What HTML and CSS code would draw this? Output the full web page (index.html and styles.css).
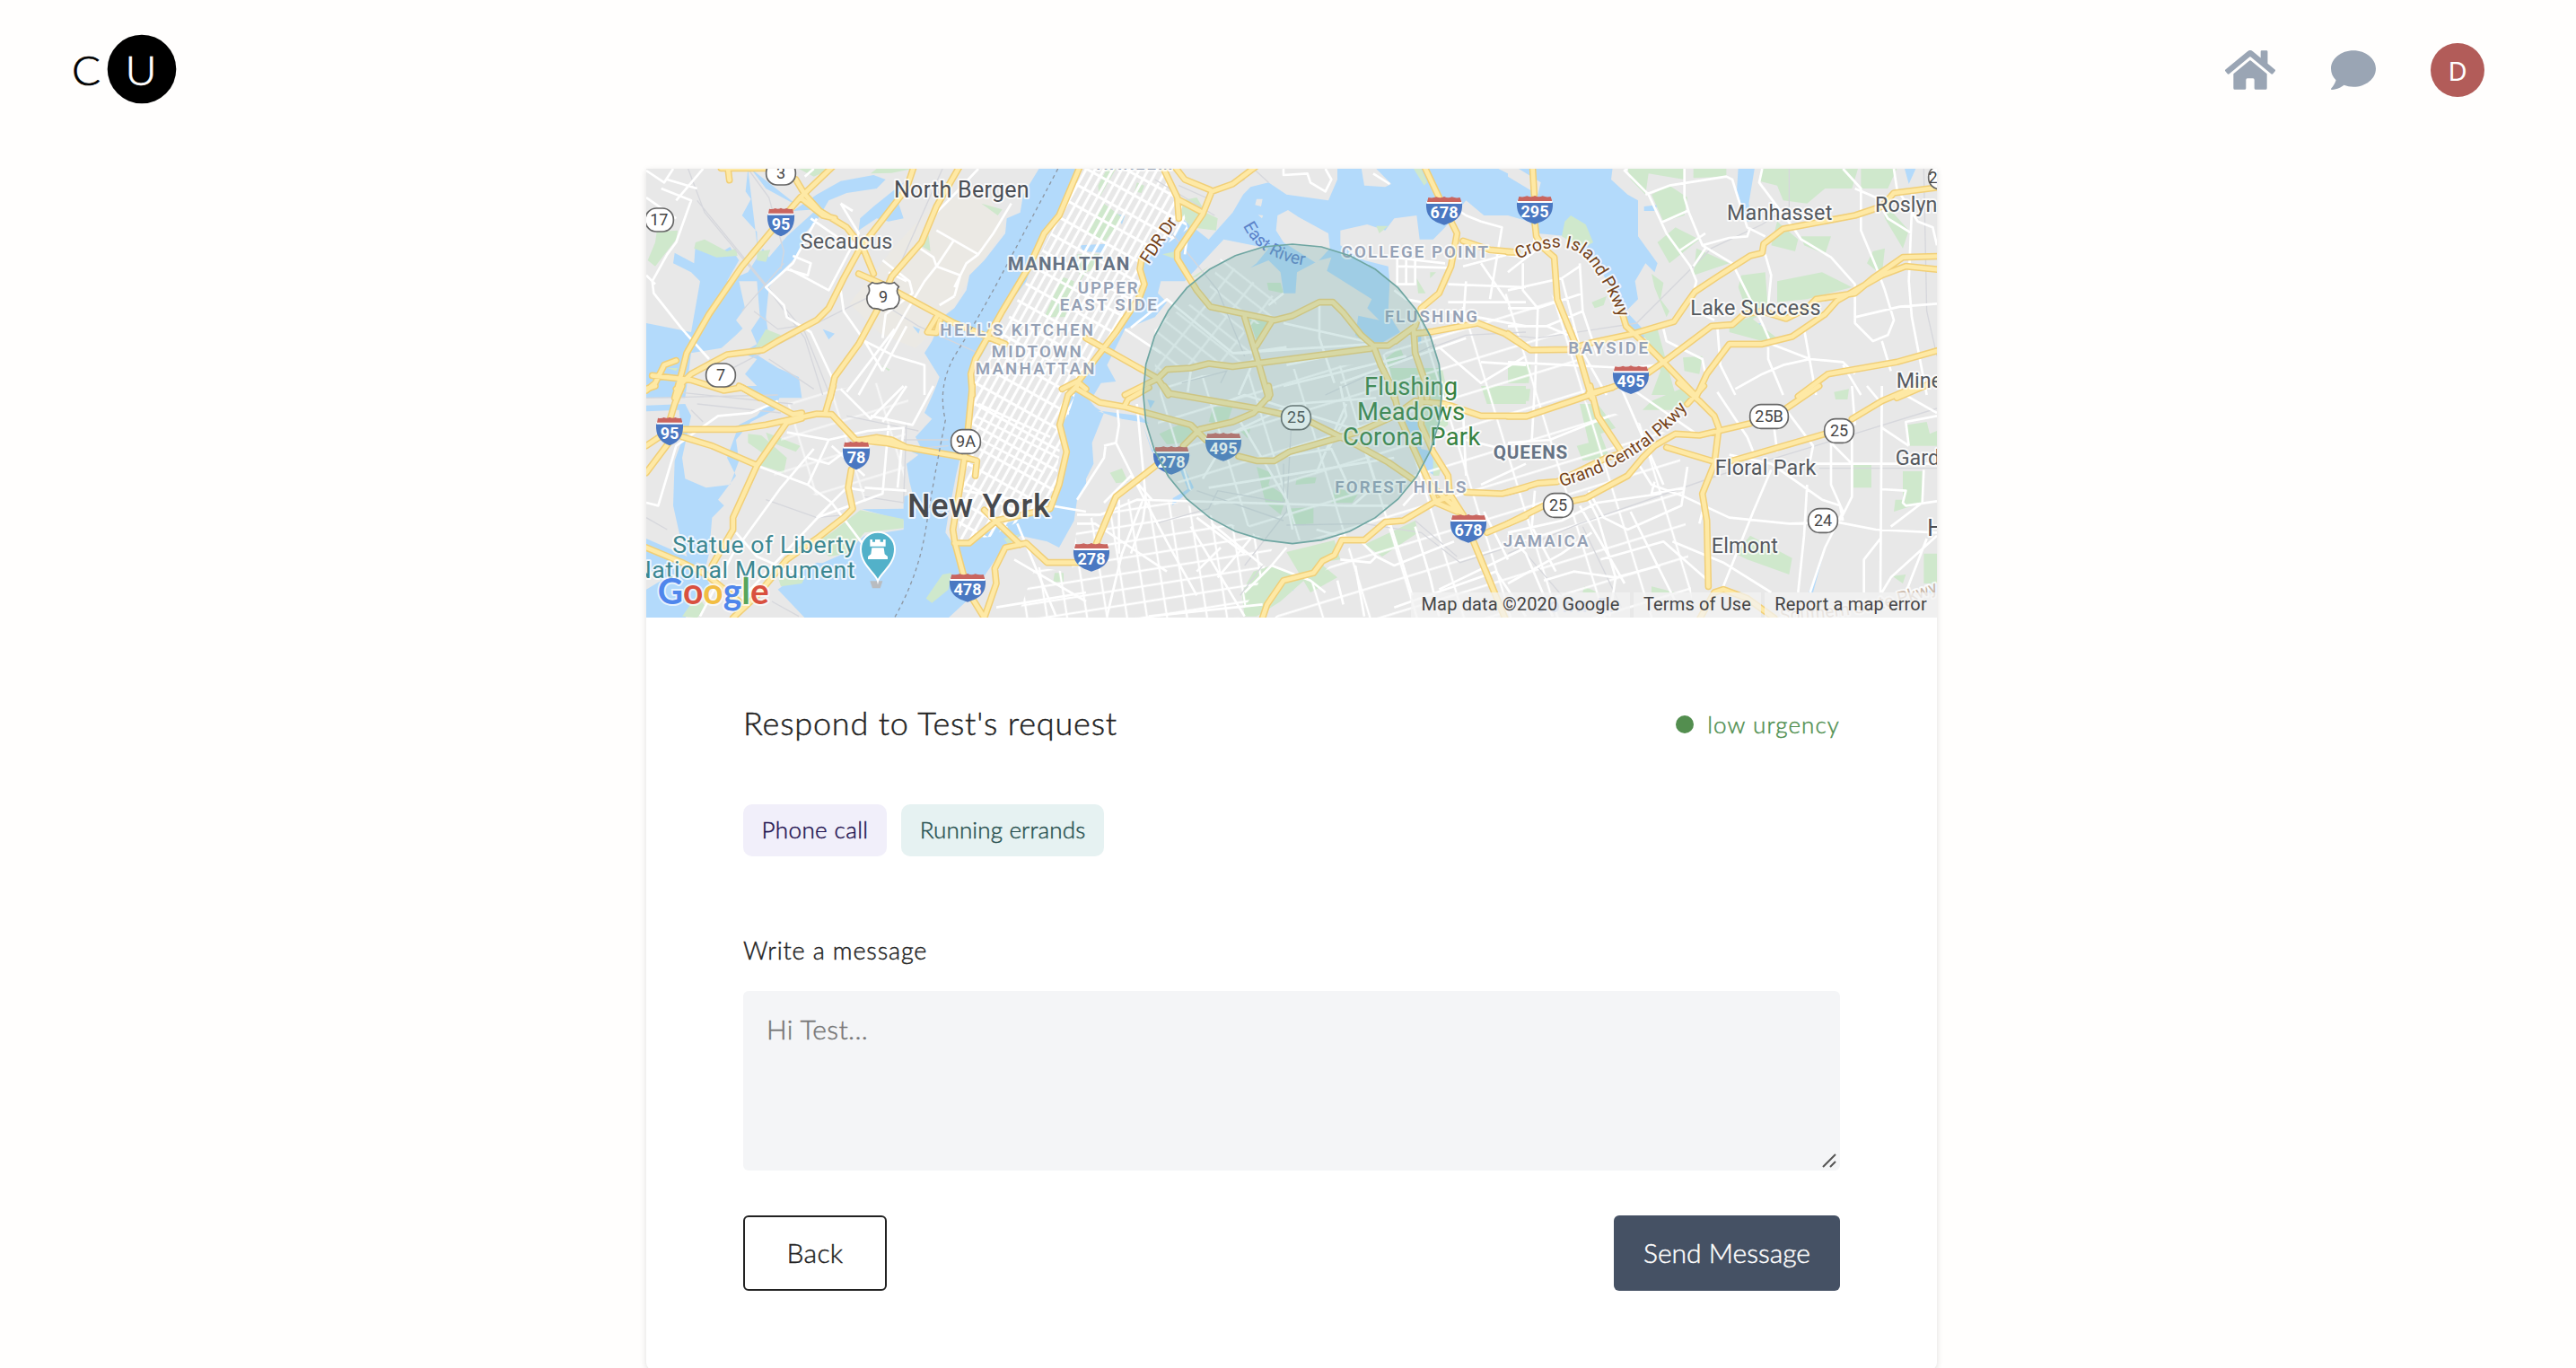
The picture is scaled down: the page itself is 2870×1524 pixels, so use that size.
FILE: index.html
```html
<!DOCTYPE html>
<html lang="en">
<head>
<meta charset="utf-8">
<title>Respond to Test's request</title>
<link rel="stylesheet" href="styles.css">
</head>
<body>
<header class="topbar">
  <a class="logo" aria-label="CU">
    <svg width="116" height="78" viewBox="81 38 116 78">
      <circle cx="158" cy="77" r="38.3"/>
      <text class="logo-c" x="80" y="94.500" textLength="32" lengthAdjust="spacingAndGlyphs">C</text>
      <text class="logo-u" x="139.500" y="94.500" textLength="35" lengthAdjust="spacingAndGlyphs">U</text>
    </svg>
  </a>
  <nav class="nav">
    <svg class="nav-icon home" viewBox="0 0 576 512"><path d="M280.370 148.260L96 300.110V464a16 16 0 0 0 16 16l112.060-.29a16 16 0 0 0 15.920-16V368a16 16 0 0 1 16-16h64a16 16 0 0 1 16 16v95.640a16 16 0 0 0 16 16.050L464 480a16 16 0 0 0 16-16V300L295.670 148.260a12.190 12.190 0 0 0-15.300 0zM571.600 251.470L488 182.560V44.050a12 12 0 0 0-12-12h-56a12 12 0 0 0-12 12v72.610L318.470 43a48 48 0 0 0-61 0L4.340 251.470a12 12 0 0 0-1.600 16.900l25.500 31A12 12 0 0 0 45.150 301l235.220-193.740a12.190 12.190 0 0 1 15.300 0L530.900 301a12 12 0 0 0 16.900-1.600l25.500-31a12 12 0 0 0-1.700-16.930z"/></svg>
    <svg class="nav-icon chat" viewBox="0 0 512 512"><path d="M256 32C114.600 32 0 125.100 0 240c0 49.600 21.400 95 57 130.700C44.500 421.100 2.700 466 2.200 466.500c-2.200 2.300-2.800 5.700-1.500 8.700S4.800 480 8 480c66.300 0 116-31.800 140.600-51.400 32.700 12.300 69 19.400 107.400 19.400 141.400 0 256-93.100 256-208S397.400 32 256 32z"/></svg>
    <span class="avatar">D</span>
  </nav>
</header>

<main class="card">
  <div class="map">
    <svg class="map-svg" viewBox="0 0 4314 1500">
      <defs>
        <pattern id="gridManhattan" width="26" height="62" patternUnits="userSpaceOnUse" patternTransform="rotate(29)"><path class="gl dense" d="M13 0V62M0 31H26"/></pattern>
        <pattern id="gridQueens" width="78" height="46" patternUnits="userSpaceOnUse" patternTransform="rotate(38)"><path class="gl" d="M39 0V46M0 23H78"/></pattern>
        <pattern id="gridBrooklyn" width="66" height="52" patternUnits="userSpaceOnUse" patternTransform="rotate(-9)"><path class="gl" d="M33 0V52M0 26H66"/></pattern>
        <pattern id="gridLoose" width="150" height="105" patternUnits="userSpaceOnUse" patternTransform="rotate(-17)"><path class="gl" d="M75 0V105M0 52H150"/></pattern>
        <symbol id="i2" viewBox="0 0 90 96" overflow="visible"><path fill="#4a78c2" d="M0 22H90C92 62 80 82 45 96C10 82-2 62 0 22Z"/><path fill="#fff" d="M1 17H89V25H1Z"/><path fill="#c9655f" d="M3 19L6 4Q17 7 26 2Q36 7 45 1Q54 7 64 2Q74 7 84 4L88 19Z"/></symbol>
        <symbol id="i3" viewBox="0 0 120 96" overflow="visible"><path fill="#4a78c2" d="M0 22H120C122 66 104 82 60 96C16 82-2 66 0 22Z"/><path fill="#fff" d="M1 17H119V25H1Z"/><path fill="#c9655f" d="M3 19L7 4Q22 7 34 2Q48 8 60 1Q72 8 86 2Q98 7 113 4L118 19Z"/></symbol>
        <g id="hw">
          <g transform="translate(-30 -24)">
            <path d="M655 15L545 120 450 230 350 350 240 510 165 640 150 700 125 790M530 60L560 110 610 165 700 220 755 290 790 375M925 15L900 90 745 290 690 390 640 490 600 530 470 600 420 630 300 645 180 710 130 760M1078 15L1000 150 950 270 850 385 800 500 740 610 660 720 645 790M740 375L820 410 1060 540 1230 610M1000 520L970 570 1000 572 1012 530M1480 15L1410 180 1360 240 1310 350 1220 500 1130 660 1115 710 1120 780M50 715L180 730 290 765 350 755 410 790M130 665L90 680 60 740 30 765M280 22H430M303 22L308 62M430 20L530 60M1420 760L1470 735 1500 760M545 120L620 180 660 190"/>
          </g>
          <g transform="translate(-30 726)">
            <path d="M150 0L125 60 110 110M105 190L30 290M90 160L30 200M30 10L60 0M150 145H330L430 130 600 93 650 95 730 180 830 190 900 205 1100 240 1135 250 1130 300M340 0L520 95 550 90M550 108L500 122 400 265 320 440V480L250 600M150 170L250 200 400 265M740 182L800 172 850 180 900 205M715 280L705 340 720 410 690 440 600 510 500 580 400 700 320 775M30 540L150 590 230 630 340 720M655 0L630 85M1120 0L1105 150M1095 230L1080 330 1055 480 1062 525 1090 630M1120 710L1160 775M1060 525H1110L1200 450 1290 430 1380 410 1410 330 1435 220 1412 130 1440 30 1470 0M1160 415L1280 530M1160 775L1200 660 1195 610 1230 540 1300 525 1370 590H1490"/>
          </g>
          <g transform="translate(1440 -24)">
            <path d="M325 15L360 60 445 95M600 15L520 75 450 100 420 175 335 300V325L400 430 445 485 660 530 720 515 810 470 855 470 890 505 950 580 990 615 1040 615 1130 550 1150 490 1210 440 1250 350 1270 240 1250 200M285 15L335 120 340 190M340 128L410 165M215 330L210 360 225 410 210 450 130 570 0 740M30 590L270 725 305 780M160 780L270 725 300 695 380 690 440 675 520 685 980 625M560 520L600 650 640 790M650 535L600 615M1160 15L1210 120M1290 265L1380 295 1470 303M1130 575L1190 568 1340 540 1430 575 1500 620M1125 560L1130 640 1165 740 1170 790M990 615L1015 680 1045 740 1060 790M1130 550L1065 600"/>
          </g>
          <g transform="translate(2880 -24)">
            <path d="M82 10L88 110M90 205L95 250 120 290 155 320 165 460 230 620 280 790M0 303H30M380 500L395 550 470 620 520 670 630 785M0 575L75 630 200 628 280 605 420 575 555 535 600 470 625 435 700 385 810 315 850 305 855 275 920 225 1160 180 1250 150 1290 105 1450 85M470 705L520 670 680 550 750 545 790 510 850 500 930 525 1000 490 1030 460 1160 440 1220 390 1320 320 1450 316M630 785L665 710 740 610 850 610 950 585 1060 510 1100 465 1250 380 1330 350 1450 362M970 785L1070 710 1300 670 1450 628M270 775L350 755M1300 790L1450 725"/>
          </g>
          <g transform="translate(1440 726)">
            <path d="M0 10L75 55 160 70 380 130 430 180M160 65L170 45 240 5M290 0L310 25 600 75 690 95M780 120L870 165 940 200 1040 255 1120 310M640 0L645 30 590 90 520 120 410 145 355 200M540 235L600 250H660L710 220 850 180 950 150 1060 100 1130 50 1230 60 1350 100H1500M1055 10L1080 110 1180 330 1290 430M1150 10V130L1190 220 1240 300 1245 360 1290 430M265 265L130 370 65 525M620 775L635 730 690 650 790 625 820 585 860 565 885 515H960L1030 455 1090 450 1200 385 1250 370M1300 355L1420 360 1500 340M1370 490L1500 435M1325 520L1430 775M1180 340L1200 390 1270 420"/>
          </g>
          <g transform="translate(2880 726)">
            <path d="M0 102H60L230 45 360 0M275 0L300 100 380 220M570 -10L640 50 690 100 705 140 690 260 650 360 665 450 670 670M655 0L600 60M450 240L490 200 560 160 640 165 810 125M930 75L1040 0M530 205L680 250M750 250L1060 160M1150 110L1250 50 1370 0M0 355L100 325 165 320 330 240 380 225M0 460L120 400M215 385L260 375 400 300 450 240M640 780L690 690 720 680 800 710 890 775"/>
          </g>
        </g>
        <path id="pEast" d="M1995 190Q2050 305 2215 325"/>
        <path id="pCross" d="M2915 303Q3090 210 3165 330T3250 500"/>
        <path id="pGrand" d="M3058 1063Q3330 985 3480 800"/>
        <path id="pSouth" d="M3790 1512Q4100 1500 4330 1410"/>
      </defs>

      <rect width="4314" height="1500" fill="#e8e8e8"/>
      <g class="urban">
        <path d="M830 260L950 130 1130 60 1200 200 1060 400 1020 480 900 600 780 550 680 450Z"/>
      </g>

      <g class="water">
        <g transform="translate(-30 -24)">
          <path d="M1345 20L1290 110 1280 170 1235 190 1230 240 1160 330 1110 380 1100 430 1060 490 1020 520 985 600 960 640 1010 720 985 790H1110L1115 700 1150 650 1200 560 1240 480 1300 400 1360 240 1410 170 1480 20Z"/>
          <path d="M125 305L190 340 195 270 270 310 310 285 340 330 300 400 370 370 420 290 440 320 500 250 600 160 520 165 600 110 680 65 790 45 830 60 800 90 700 105 640 130 605 190 560 240 540 310 470 380 440 420 430 520 440 590 390 640 470 690 540 720 550 790H440L360 710 400 660 300 620 180 640 160 790H30V540L180 570 210 400 180 370 120 340Z"/>
          <path d="M370 24L362 100 380 125 350 180 400 235 402 290M380 24L430 90 540 150M740 230L745 190 790 150 890 70 870 130 890 190 840 200 800 190ZM620 560L660 575 640 595ZM920 550L945 560 940 575Z"/>
          <path fill="#e8e8e8" d="M240 660L330 580 370 540 400 610 330 650ZM340 400L400 400 410 520 370 580 330 530 360 490Z"/>
        </g>
        <g transform="translate(-30 726)">
          <path d="M1000 0L960 90 985 110 930 170 945 200 895 210 940 230 900 260 910 320 920 360 890 370 890 410 750 412 890 450 890 480 760 500 690 560 600 600 560 640 470 680 500 690 580 730 575 675 640 680 700 600 600 590 650 560 550 620 470 680 560 775H1040L1110 710 1170 620 1210 560 1240 530 1280 500 1370 520 1410 540 1460 450 1470 380 1500 330V0H1440L1415 130 1440 220 1410 350 1390 410 1260 450 1200 470 1110 530 1060 535 1030 490 1040 430 1065 300 1100 150 1115 0Z"/>
          <path d="M30 65L160 60 180 100 150 240 160 310 230 340 310 330 340 250 330 180 380 120 460 80 490 0H350L440 50 400 100 340 130 300 240 330 300 270 380 290 400 250 440 240 560 230 600 170 580 140 490 120 400 125 250 150 180 140 80 30 85ZM30 510L190 580 230 640 250 680 180 750 160 775H30V680L80 650 30 600Z"/>
        </g>
        <g transform="translate(1440 -24)">
          <path d="M870 20V60L840 130 700 110 640 70 580 85 555 110 520 170 440 260 350 190 330 230 240 310 215 340 230 400 215 440 140 580 50 680 0 740V790H50L80 740 130 735 100 680 160 560 260 520 300 470 270 440 280 400 360 400 490 260 640 290 600 340 580 355 640 330 680 370 690 440H730L735 370 810 330 850 320 835 365 985 460 970 490 1010 530 940 515 930 580 960 605 1020 605 1080 570 1060 540 1040 500 1045 400 1040 350 960 330 880 280V230L970 210 1030 230 1060 190 1135 180 1145 260H1190L1230 220 1300 130 1360 180 1500 180V20Z"/>
          <path d="M10 280L95 275 90 305 20 300ZM130 175L160 180 150 210ZM1140 570H1150V610H1140Z"/>
          <path fill="#e8e8e8" d="M670 180L705 162 740 185 840 240 845 290 800 340 690 270 665 230ZM950 20L960 80 1030 85 1050 75 1000 24ZM600 125H620L615 150 595 145ZM605 178L622 180 618 190ZM1400 20L1500 70V20Z"/>
        </g>
        <g transform="translate(2880 -24)">
          <path d="M0 20H350L345 60 400 110 435 130V250L500 340 490 370 460 340 425 400 435 460 395 500 470 580 450 590 390 530 370 480 300 340 200 250 100 240 70 200 0 180ZM770 20H825L805 140 815 200 800 200 765 100ZM455 150L500 145 490 165 455 165ZM1325 20H1365L1340 75ZM815 545L845 540 835 580 808 580Z"/>
          <path fill="#e8e8e8" d="M0 20H30L110 70 100 110 0 50Z"/>
        </g>
        <g transform="translate(1440 726)">
          <path d="M0 0L60 70 90 90 50 190 55 260 0 370ZM70 85L150 110 240 125 210 100 90 85ZM220 130L250 210 320 250 380 230 355 265 390 340 318 400 320 375 370 345 340 270 250 220ZM1085 110L1140 120 1150 210 1190 220 1195 300 1165 280 1130 200ZM705 655L725 685 708 680ZM235 45L260 50 245 75Z"/>
        </g>
        <g transform="translate(2880 726)"><path d="M1050 580L1020 690 1005 690ZM1434 640L1400 690 1434 700Z"/></g>
      </g>

      <g class="park">
        <g transform="translate(-30 -24)"><path d="M540 24H650L590 50ZM800 24H920L850 38 780 40ZM65 235L135 230 130 260 60 350 35 330 60 270ZM195 270L225 260 300 300 330 290 335 315 265 320 190 290ZM400 300L445 295 430 335 400 330ZM430 560L480 580 440 615 395 620ZM970 215L980 300 945 280ZM1150 140L1220 160 1205 180ZM100 690L135 690 130 700ZM1420 385L1460 400 1430 520 1360 520Z M815 680L845 695 840 700Z"/></g>
        <g transform="translate(-30 726)"><path d="M370 160L415 165 500 240 490 290 410 265 420 225 370 190ZM430 155L545 200 530 220 440 185ZM745 415L890 445V475L760 490 700 560 640 570 600 520 650 490ZM1020 630L1050 625 1040 680 985 725 965 710ZM150 770L200 700 230 740 200 775ZM470 640L560 640 550 660 480 670ZM1225 510L1280 495 1240 530ZM1395 625H1425V655H1390Z"/></g>
        <g transform="translate(1440 -24)"><path d="M90 140L155 190 90 270 30 240ZM100 24H130L75 120 70 80ZM200 70L225 80 215 105 192 100ZM350 130L400 120 430 170 470 190 465 230 380 220 350 180ZM285 310L330 300 340 330ZM1125 24L1160 80 1170 70 1150 24ZM1000 215L1040 215 1010 240ZM1135 390L1165 440 1140 440ZM1180 370L1200 370 1180 390ZM575 525L645 535 600 600ZM635 405L680 405 690 440 640 430ZM1030 660L1080 620 1095 660 1030 700ZM1045 690L1220 690 1240 780H1060ZM1440 680H1500V740H1440ZM380 390L440 350 400 385ZM0 310H85L60 360 30 370 10 400Z"/></g>
        <g transform="translate(2880 -24)"><path d="M190 200L210 180 260 210 285 270 250 290 180 250ZM400 24H590V60L470 40 460 110 410 60ZM620 24H730V50L620 55ZM850 24H1170L1150 90 1060 90 1000 140 920 130 900 80 840 65ZM480 110L540 80 600 120 590 180 520 200ZM1180 24H1300L1270 90 1180 90ZM900 200L970 260 960 300 880 280ZM500 270L560 220 640 260 540 340ZM980 250L1080 250 1060 310 990 280ZM630 290L740 340 620 380ZM780 380L860 370 870 500 810 530 770 420ZM900 400L1050 370 1150 420 1000 460 900 470ZM1220 300L1260 290 1250 380 1200 340ZM480 375L520 405 510 460 540 500 530 520 490 420ZM440 560L500 560 560 780H480L510 700 480 620ZM585 655L650 650 640 710 590 700ZM740 545L810 520 900 590 850 600 740 570ZM1250 130L1340 230 1320 290 1260 190ZM0 675L75 680 70 740 0 740ZM280 470L330 450 320 480 290 490Z"/></g>
        <g transform="translate(1440 726)"><path d="M455 70H520L500 130 440 120ZM275 160L340 130 400 140 360 190 300 195ZM600 270L650 290 640 330 700 370 680 430 630 390ZM735 305H800L795 325 730 330ZM700 410L790 405V460L720 465ZM860 340L940 360 920 390 850 390ZM1230 0L1240 130 1170 180 1150 30ZM700 555L860 515 880 580 810 590 870 640 780 690ZM960 530L1130 450 1140 490 1020 570ZM550 690L590 620 650 600 770 640 680 720 600 770H560ZM110 290L150 275 170 320 130 325ZM1350 0H1500V60H1370ZM545 150L580 140 570 175ZM1190 230L1220 260 1210 300 1190 300Z"/></g>
        <g transform="translate(2880 726)"><path d="M0 10H75L70 50 0 50ZM240 60L300 60 360 140 310 160 340 240 250 250 230 200 270 190ZM480 50L600 0 640 30 560 80 450 80ZM1090 20L1140 10 1135 45 1095 45ZM1335 130L1400 120 1410 160 1434 150V200L1340 200ZM1155 262H1215V340H1155ZM1320 285H1385V390L1290 420 1295 380 1320 380ZM810 500L950 575 940 630 800 580 760 560ZM1390 560H1434V660H1390ZM1285 635L1330 630 1320 660ZM480 670L560 690H480ZM255 670L300 690H250Z"/></g>
      </g>

      <g class="grids">
        <path fill="url(#gridManhattan)" d="M1460 0H1735L1785 100 1810 200 1660 310 1655 390 1560 560 1440 730 1400 860 1380 950 1365 1110 1260 1170 1150 1230 1050 1240 1040 1130 1085 870 1100 690 1180 560Z"/>
        <path fill="url(#gridQueens)" d="M1920 300L2100 430 2120 500 1960 540 1880 520 1860 450ZM1700 520L1840 440 1890 480 1990 520 2030 640 1700 680Z" opacity=".8"/>
        <path fill="url(#gridBrooklyn)" d="M1440 1190L1620 1100 1800 1120 2100 1250 2040 1400 1980 1500H1240L1300 1330 1420 1350Z"/>
        <path fill="url(#gridLoose)" d="M1720 700L2430 650 2600 500 3000 380 3120 560 3140 780 3450 900 3500 1500H2100L2400 1220 2100 1250 1700 1000Z"/>
        <path fill="url(#gridLoose)" d="M480 760L880 700 860 1080 700 1120 420 1060Z" opacity=".6"/>
      </g>

      <g class="rail">
        <g transform="translate(-30 -24)"><path d="M170 24L225 170 440 430 560 590 620 780M370 24L440 120 490 300 480 360M490 340L350 500M1020 24L880 340 790 520M390 500L470 560 600 540 780 450 940 550 1140 640M200 130L560 570 640 770M300 700L530 580M440 660L590 760"/></g>
        <g transform="translate(-30 726)"><path d="M30 40L470 30M130 20L520 60M200 60L480 90M890 180H1040M430 380L600 440 700 430M700 100L940 150M760 370L890 390 900 120M180 80L220 120M450 720L540 770M30 440L100 480M910 210L1040 200"/></g>
        <g transform="translate(1440 -24)"><path d="M260 60L460 180M340 80L430 120 560 60M590 24L640 70M300 220L470 430 560 650M1190 620L1300 580 1500 570M350 740L500 700 480 740M830 780L1200 610"/></g>
        <g transform="translate(2880 -24)"><path d="M0 580L100 590 430 540 620 350 680 290 850 210 940 150 940 24M1390 24L1400 500 1434 650"/></g>
        <g transform="translate(1440 726)"><path d="M260 460L440 410 470 350 690 390 690 260M560 600L700 420 720 60M700 465L960 460 1150 490 1280 590 1500 520M545 700L620 600M1130 450L1270 570M400 350L690 450"/></g>
        <g transform="translate(2880 726)"><path d="M0 560L240 460 700 300 1060 190 1434 75M1040 275H1434M60 560L180 700M250 470L380 740"/></g>
      </g>

      <g class="streets">
        <g transform="translate(-30 -24)"><path d="M30 120L130 190M80 90L180 130 130 270 100 310 50 400 55 440 150 560 240 660M30 380L60 410M220 24L130 130M100 60L200 90M30 30L90 70 120 24M600 190L520 340 430 420 490 480 500 520 580 570 650 720M680 140L740 240 640 430 510 360M580 190L680 260M680 430L690 500 760 600 820 700M820 330L910 400 920 440 830 510 820 590M990 180L1040 130 1140 24M930 280L990 320 1000 350 960 400 900 500 740 780M1000 230L1140 310 1190 240 1250 140M1000 350L1080 380 1060 450M760 600L860 650 960 680 960 780M820 700L900 550M1060 450L1010 480M700 770L860 560M520 315L580 340 570 380 500 360M680 140L720 165M1060 260L1000 350M560 50L590 24M840 370L900 400M1140 310L1100 340 1060 420"/></g>
        <g transform="translate(-30 726)"><path d="M500 155L640 180 770 150 890 140 870 340M600 440L820 360 840 130M600 440L700 340 760 350M410 270L570 330 650 390 800 590M650 390L350 710M590 210L480 340 320 560 210 770M640 180L570 330M30 390L70 400 130 200 270 100 380 90 470 50M780 100L920 130 990 0M680 10L780 110 890 0M570 240L640 260 720 200M330 490L400 570 560 640M1140 60L1380 170M1130 100L1410 240M1110 160L1360 290M1090 350L1500 420M1270 460L1320 580 1400 770M1260 580L1500 720M1200 740L1500 690M760 340L900 350M820 120L900 0M650 200L760 300"/></g>
        <g transform="translate(1440 -24)"><path d="M690 24V45L770 40 780 70 830 100 850 60 830 24M990 40L1045 75M370 240L360 310M1060 320L1140 330 1230 340M1070 350L1240 355M1070 320V410H1130V330M1100 330V410M1300 180L1350 200 1420 220 1380 460M1240 410L1500 420M1240 470H1500M1230 500L1500 550M1290 350L1480 300M1350 340L1440 470M1300 400L1290 540M1060 430L1100 460 1150 470M160 560L280 640M180 555L300 460 520 640 560 640 700 620M690 540L960 600M520 640L980 610M810 470L810 590 860 740M690 750L1100 650M880 740L1300 590M1210 620L1350 740 1500 650M1350 670L1500 680M640 480L690 440M370 770L380 700M580 690L540 780M700 680L840 650M1300 180L1270 160M1350 300L1500 320"/></g>
        <g transform="translate(2880 -24)"><path d="M400 24L390 30 470 110 530 240 610 350 630 400 620 440M460 110L540 80 730 50 750 60 800 220 860 250M590 24V120L605 170 650 280 750 340 850 540 880 610 1010 660 1120 670 1160 710M510 205L600 165M570 300L660 240M650 280L740 255 800 250 810 220M620 350L660 290M850 24L840 70 960 230 980 260 1080 320 1160 410 1160 540 1220 600 1270 580 1290 530 1260 430 1230 350 1180 230 1180 90 1120 24M1160 90L1230 120 1270 190 1350 240M1290 24L1300 90 1370 200 1420 220 1434 280M1350 160L1340 400 1350 520 1400 780M1160 520L1310 485 1434 475M860 310L880 380 870 480M0 370L50 330 90 300 80 24M50 340V430L100 490 90 780M0 430L180 390 240 350M0 490L100 490 250 440M130 550L250 500M0 550L130 550 200 580M180 390L240 620 330 780M240 340L250 500 300 650M0 670L400 690 500 680M520 560L530 600 650 660 660 710M700 550L710 680 760 780M760 760L850 710 920 680 1010 660M990 560L1030 780M870 620V660L920 780M1250 600L1280 700M1120 680L1180 780M650 510L690 530"/></g>
        <g transform="translate(1440 726)"><path d="M90 200L130 190 140 130 135 80M95 200L90 240 0 380M130 190L200 330 300 520 400 700M200 60L230 380 220 450 180 560M0 430L80 430 200 380 900 400 1040 400M140 380V560M90 390L180 300 250 380M0 460L60 460 300 620M400 440L560 560M450 460L620 600M380 470L560 770M480 540L400 620M580 510L470 640M700 540L650 600 780 650 830 690M650 600L560 690M800 480L950 520 1000 570 980 590 880 580M240 770L620 730M440 340L1060 240M420 310L510 160 720 60 1000 40M540 110L700 380 720 480M600 250L850 210 910 340M840 210L900 100 880 0M800 290L900 60M480 60L560 30 980 160M960 210L1000 330 920 400M1290 80L1300 300M1300 180L1500 230M1350 330L1500 260M1130 470L1180 640 1210 770M1000 570L1060 600 1260 520M1040 440L1090 600 1120 700M930 600L960 770M1210 680L1500 540M1060 740L1400 620 1500 770M870 650L890 730M1360 420L1440 580M1180 300L1090 400M220 380L150 560 100 770"/></g>
        <g transform="translate(2880 726)"><path d="M90 0L80 180M0 190L140 180 340 100M380 10L520 330M400 0L630 160M430 250L480 330 590 370 740 440 940 460 1100 455 1230 480 1434 490M490 320L480 360 590 340M510 360L300 390 180 450 0 490M270 350L320 440 400 480 580 400 600 270M260 360L300 440 360 640 340 770M240 400L390 660M410 420L520 640 560 720M310 580L520 520 680 660M550 520L720 590 880 690M510 600L360 640 220 620 120 650M880 280L820 420 720 670M740 230L880 260 1050 380 1110 400 1120 450M1000 330L990 500 970 690M1080 190V330L1120 420 1060 540 1010 690M1080 190L1150 260M1150 160V370L1110 450M1150 0L1160 130M1030 260L1434 260M1250 0L1245 690M1250 140L1340 200M1200 0L1250 60M1340 200L1330 120 1434 100M1390 280L1385 390 1280 470M1250 345L1330 350 1320 390 1330 400 1434 385M1245 510L1190 580V690M1434 500L1280 640 1250 690M1400 510L1330 690M800 170L820 220M700 20L800 170M880 60L900 220M930 80L1020 200 1010 250M640 460L650 420M0 660L180 560 280 490M0 500L60 560 150 770M90 350L80 470 160 620M1310 20L1434 90"/></g>
      </g>

      <use href="#hw" class="hw casing"/>
      <use href="#hw" class="hw fill"/>

      <g class="ferry">
        <path d="M1376 0Q1270 200 1190 350T1040 610 1000 840Q960 1040 935 1200T830 1500"/>
      </g>

      <g class="labels">
        <g transform="translate(-30 -24)">
          <text class="city lg" x="858" y="120" textLength="452">North Bergen</text>
          <text class="city" x="545" y="290" textLength="308">Secaucus</text>
          <text class="hood" x="1012" y="582" textLength="512">HELL'S KITCHEN</text>
          <text class="boro" x="1238" y="362" textLength="407">MANHATTAN</text>
          <text class="hood" x="1472" y="440" textLength="201">UPPER</text>
          <text class="hood" x="1412" y="497" textLength="324">EAST SIDE</text>
          <text class="hood" x="1184" y="654" textLength="300">MIDTOWN</text>
          <text class="hood" x="1130" y="711" textLength="398">MANHATTAN</text>
        </g>
        <g transform="translate(1440 -24)">
          <text class="hood" x="64" y="28" textLength="255">HARLEM</text>
          <text class="road" transform="translate(240 345) rotate(-56)" textLength="172">FDR Dr</text>
          <text class="hood" x="884" y="320" textLength="490">COLLEGE POINT</text>
          <text class="hood" x="1028" y="536" textLength="310">FLUSHING</text>
          <text class="parkname" x="960" y="779" textLength="312">Flushing</text>
          <text class="parkname" x="936" y="863" textLength="360">Meadows</text>
          <text class="parkname" x="888" y="947" textLength="460">Corona Park</text>
        </g>
        <text class="river"><textPath href="#pEast" textLength="255">East River</textPath></text>
        <text class="road"><textPath href="#pCross" textLength="470">Cross Island Pkwy</textPath></text>
        <text class="road"><textPath href="#pGrand" textLength="505">Grand Central Pkwy</textPath></text>
        <text class="road faded"><textPath href="#pSouth" textLength="540">Southern State Pkwy</textPath></text>
        <g transform="translate(2880 -24)">
          <text class="city" x="732" y="194" textLength="352">Manhasset</text>
          <text class="city" x="1227" y="169" textLength="208">Roslyn</text>
          <text class="city" x="610" y="514" textLength="436">Lake Success</text>
          <text class="hood" x="202" y="641" textLength="266">BAYSIDE</text>
          <text class="city" x="1298" y="755">Mineola</text>
        </g>
        <g transform="translate(-30 726)">
          <text class="ny" x="903" y="438" textLength="476">New York</text>
          <text class="poi" x="118" y="559" textLength="612">Statue of Liberty</text>
          <text class="poi" x="-10" y="643" textLength="738">National Monument</text>
        </g>
        <g transform="translate(1440 726)">
          <text class="boro" x="1391" y="242" textLength="248">QUEENS</text>
          <text class="hood" x="862" y="356" textLength="438">FOREST HILLS</text>
          <text class="hood" x="1424" y="537" textLength="284">JAMAICA</text>
        </g>
        <g transform="translate(2880 726)">
          <text class="city" x="692" y="298" textLength="338">Floral Park</text>
          <text class="city" x="680" y="558" textLength="223">Elmont</text>
          <text class="city" x="1295" y="263">Garden City</text>
          <text class="city lg" x="1402" y="502">Hempstead</text>
          <text class="river jfk" x="90" y="755" textLength="265">John F.</text>
        </g>
      </g>

      <g class="pin" transform="translate(-30 726)">
        <path fill="#b9bcc0" d="M778 652H820L812 676H786Z"/>
        <path class="pin-body" d="M804 652C797 625 747 600 747 545A57 57 0 0 1 861 545C861 600 811 625 804 652Z"/>
        <path fill="#fff" d="M778 513H786V521H795V513H812V521H822V513H830V536H778ZM784 541H824L827 562 837 570V579H771V570L781 562Z"/>
      </g>

      <g class="ishield" transform="translate(0 2)">
        <use href="#i2" x="405" y="128" width="90" height="96"/><text x="450" y="201">95</text>
        <use href="#i2" x="33" y="827" width="90" height="96"/><text x="78" y="901">95</text>
        <use href="#i2" x="657" y="908" width="90" height="96"/><text x="702" y="982">78</text>
        <use href="#i3" x="1014" y="1350" width="120" height="96"/><text x="1074" y="1423">478</text>
        <use href="#i3" x="2607" y="90" width="120" height="96"/><text x="2667" y="162">678</text>
        <use href="#i3" x="2910" y="87" width="120" height="96"/><text x="2970" y="160">295</text>
        <use href="#i3" x="3231" y="655" width="120" height="96"/><text x="3291" y="728">495</text>
        <use href="#i3" x="1695" y="924" width="120" height="96"/><text x="1755" y="997">278</text>
        <use href="#i3" x="1869" y="879" width="120" height="96"/><text x="1929" y="952">495</text>
        <use href="#i3" x="2688" y="1152" width="120" height="96"/><text x="2748" y="1225">678</text>
        <use href="#i3" x="1428" y="1248" width="120" height="96"/><text x="1488" y="1321">278</text>
      </g>
      <g class="sshield">
        <rect x="401" y="-24" width="98" height="78" rx="37"/><text x="450" y="34">3</text>
        <rect x="-3" y="132" width="94" height="78" rx="37"/><text x="43" y="190">17</text>
        <rect x="200" y="651" width="98" height="78" rx="37"/><text x="249" y="709">7</text>
        <rect x="1019" y="872" width="98" height="80" rx="37"/><text x="1068" y="931">9A</text>
        <rect x="2123" y="792" width="98" height="80" rx="37"/><text x="2172" y="850">25</text>
        <rect x="3689" y="788" width="128" height="80" rx="37"/><text x="3753" y="847">25B</text>
        <rect x="3938" y="836" width="98" height="80" rx="37"/><text x="3987" y="895">25</text>
        <rect x="2999" y="1085" width="98" height="80" rx="37"/><text x="3048" y="1143">25</text>
        <rect x="3884" y="1136" width="98" height="80" rx="37"/><text x="3933" y="1194">24</text>
        <rect x="4286" y="-10" width="98" height="78" rx="37"/><text x="4316" y="48">25</text>
        <path d="M742 392L755 380Q774 388 792 379Q810 388 829 380L844 394Q832 408 845 425Q850 454 828 466Q808 466 792 474Q776 466 756 466Q734 454 738 425Q752 408 742 392Z"/><text x="792" y="446">9</text>
      </g>

      <polygon class="area" points="2160,252 2257,261 2351,290 2437,336 2513,398 2575,474 2621,560 2650,654 2659,751 2650,848 2621,942 2575,1028 2513,1104 2437,1166 2351,1212 2257,1241 2160,1253 2063,1241 1969,1212 1883,1166 1807,1104 1745,1028 1699,942 1670,848 1661,751 1670,654 1699,560 1745,474 1807,398 1883,336 1969,290 2063,261"/>

      <text class="google" x="38" y="1455" textLength="372" lengthAdjust="spacingAndGlyphs"><tspan fill="#4f86ec">G</tspan><tspan fill="#d9503f">o</tspan><tspan fill="#f2bd42">o</tspan><tspan fill="#4f86ec">g</tspan><tspan fill="#58a55c">l</tspan><tspan fill="#d9503f">e</tspan></text>
    </svg>
    <div class="credits">
      <span class="credit data">Map data ©2020 Google</span>
      <span class="credit terms">Terms of Use</span>
      <span class="credit report">Report a map error</span>
    </div>
  </div>

  <section class="content">
    <div class="title-row">
      <h1 class="title">Respond to Test's request</h1>
      <div class="urgency"><span class="dot"></span>low urgency</div>
    </div>
    <div class="chips">
      <span class="chip call">Phone call</span>
      <span class="chip errands">Running errands</span>
    </div>
    <label class="label">Write a message</label>
    <div class="message">
      <span class="placeholder">Hi Test...</span>
      <svg class="grip" width="16" height="16" viewBox="0 0 16 16"><path d="M1 15L15 1M9 15L15 9"/></svg>
    </div>
    <div class="actions">
      <button class="btn back">Back</button>
      <button class="btn send">Send Message</button>
    </div>
  </section>
</main>
</body>
</html>
```
FILE: styles.css
```css
* { box-sizing: border-box; }
html, body { margin: 0; height: 1524px; overflow: hidden; }
body {
  background: #fffefd;
  font-family: Lato, "Liberation Sans", sans-serif;
  font-weight: 300;
  color: #222;
}
.topbar {
  height: 188px;
  padding: 38px 102px 0 81px;
  display: flex;
  justify-content: space-between;
  align-items: flex-start;
}
.logo svg { display: block; }
.logo text { font-size: 45px; font-weight: 300; stroke: #000; stroke-width: .7; }
.logo .logo-u { fill: #fff; stroke: #fff; }
.nav { display: flex; align-items: center; height: 60px; margin-top: 10px; }
.nav-icon { height: 50px; fill: #9aa5b4; display: block; }
.home { width: 56px; margin-right: 62px; }
.chat { width: 50px; margin-right: 61px; }
.avatar {
  width: 60px; height: 60px; border-radius: 50%;
  background: #b25c59; color: #fff;
  font: 400 29px/61px "Noto Sans", sans-serif; text-align: center;
}
.card {
  width: 1438px; height: 1338px; margin-left: 720px;
  background: #fff; border-radius: 0 0 8px 8px;
  box-shadow: 0 2px 7px rgba(0, 0, 0, .13);
}
.map { position: relative; height: 500px; overflow: hidden; }
.map-svg { display: block; width: 1438px; height: 500px; font-family: Roboto, sans-serif; font-weight: 400; }
.gl { stroke: #fff; stroke-width: 7; fill: none; }
.gl.dense { stroke-width: 9; }
.urban { fill: #ebe9e4; }
.water { fill: #b3dafb; }
.park { fill: #cfe8cc; }
.rail path { fill: none; stroke: #d6d7dc; stroke-width: 4; }
.streets path { fill: none; stroke: #fff; stroke-width: 8; stroke-linejoin: round; }
.hw { fill: none; stroke-linejoin: round; stroke-linecap: round; }
.hw.casing { stroke: #f1cf77; stroke-width: 23; }
.hw.fill { stroke: #fee9a5; stroke-width: 14; }
.ferry path { fill: none; stroke: #8e98a4; stroke-width: 4; stroke-dasharray: 12 12; }
.labels text {
  paint-order: stroke;
  stroke: rgba(255, 255, 255, .75);
  stroke-width: 12px;
  stroke-linejoin: round;
}
.city { font-size: 70px; fill: #55595f; }
.city.lg { font-size: 75px; fill: #4a4e55; }
.hood { font-size: 56px; font-weight: 600; fill: #95a1b5; }
.boro { font-size: 62px; font-weight: 700; fill: #667384; }
.ny { font-size: 108px; font-weight: 500; fill: #47494d; }
.poi { font-size: 80px; fill: #3c8791; }
.parkname { font-size: 82px; fill: #36813f; }
.road { font-size: 58px; fill: #744219; }
.labels .river { font-size: 58px; fill: #5b82c9; stroke: none; }
.labels .jfk { font-size: 66px; fill: #a9bce3; font-weight: 500; }
.labels .faded { fill: #c9b6a6; }
.pin-body { fill: #52b1c9; stroke: #fff; stroke-width: 6; }
.ishield text { font-size: 54px; font-weight: 700; fill: #fff; text-anchor: middle; }
.sshield rect, .sshield path { fill: #fff; stroke: #666; stroke-width: 5; }
.sshield text { font-size: 54px; fill: #444; text-anchor: middle; }
.area { fill: rgba(104, 170, 168, .26); stroke: #6fa6a2; stroke-width: 5; }
.google {
  font-family: Lato, sans-serif; font-size: 122px; font-weight: 700;
  paint-order: stroke; stroke: rgba(255, 255, 255, .7); stroke-width: 12px;
}
.credits {
  position: absolute; right: 0; bottom: 0;
  display: flex; gap: 4px;
  font: 400 20px/27px Roboto, sans-serif; color: #444;
}
.credit {
  height: 28px; background: rgba(243, 243, 243, .74);
  text-align: center; white-space: nowrap; letter-spacing: .15px;
}
.data { width: 244px; }
.terms { width: 142px; }
.report { width: 192px; }
.content { padding: 88px 108px 0; -webkit-text-stroke: .45px currentColor; }
.title-row { display: flex; justify-content: space-between; align-items: center; height: 60px; }
.title { margin: -3px 0 0; font-size: 36px; font-weight: 300; letter-spacing: .82px; white-space: nowrap; }
.urgency {
  display: flex; align-items: center;
  color: #4f8f4f; font-size: 26px; letter-spacing: 1.1px; padding-top: 2px;
}
.dot { width: 20px; height: 20px; border-radius: 50%; background: #538e4f; margin-right: 15px; }
.chips { display: flex; gap: 16px; margin-top: 60px; }
.chip { height: 58px; line-height: 57px; border-radius: 10px; font-size: 26px; text-align: center; white-space: nowrap; }
.call { width: 160px; background: #f1effa; color: #1e1150; letter-spacing: .4px; }
.errands { width: 226px; background: #e6f2f2; color: #285150; letter-spacing: .15px; }
.label { display: block; margin-top: 85px; height: 40px; line-height: 39px; font-size: 27px; letter-spacing: .85px; }
.message {
  position: relative; height: 200px; margin-top: 25px; padding: 23px 26px;
  background: #f4f5f7; border-radius: 6px;
}
.placeholder { display: block; font-size: 30px; line-height: 38px; letter-spacing: .35px; color: #777; }
.grip { position: absolute; right: 4px; bottom: 3px; stroke: #555; stroke-width: 2; }
.actions { display: flex; justify-content: space-between; margin-top: 50px; }
.btn {
  height: 84px; padding: 0 0 3px; border-radius: 6px;
  font: 300 30px/76px Lato, sans-serif; text-align: center;
  -webkit-text-stroke: .45px currentColor;
}
.back { width: 160px; border: 2px solid #222; background: #fff; color: #222; letter-spacing: .3px; }
.send { width: 252px; border: 0; background: #455164; color: #fff; }
```
